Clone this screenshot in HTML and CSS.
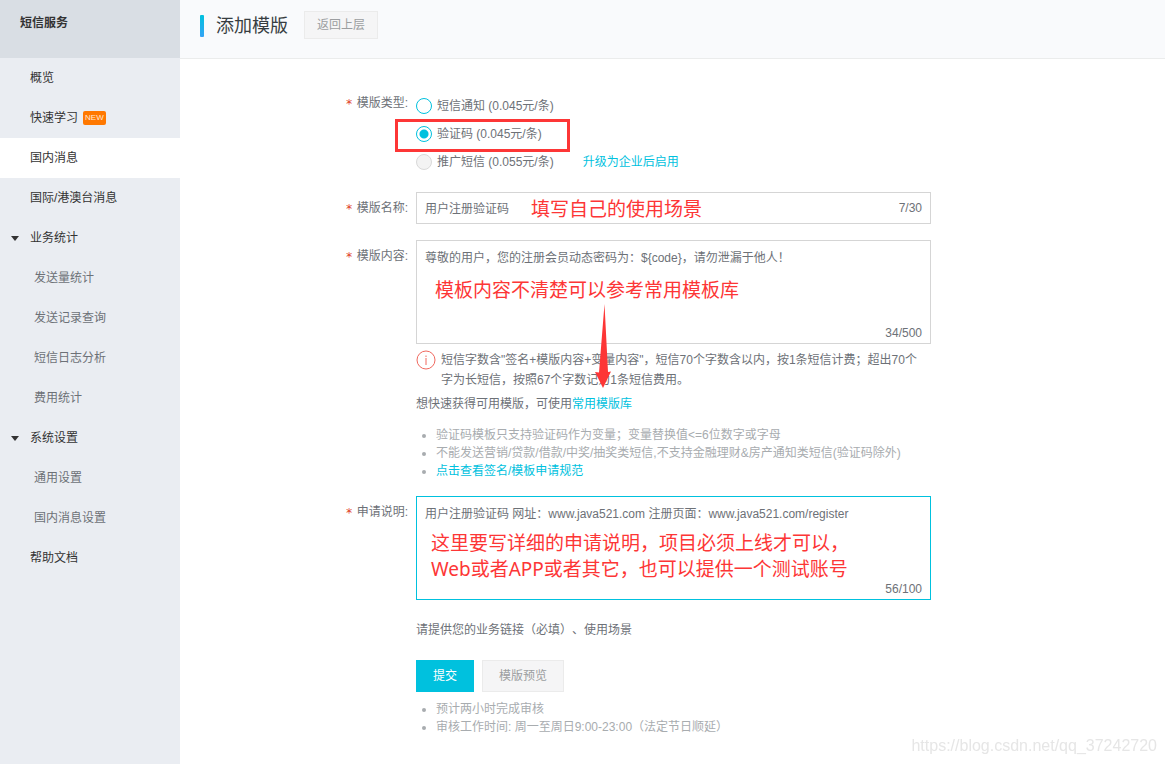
FILE: index.html
```html
<!DOCTYPE html>
<html lang="zh-CN">
<head>
<meta charset="utf-8">
<meta name="viewport" content="width=device-width, initial-scale=1">
<title>添加模版 - 短信服务</title>
<link rel="stylesheet" href="styles.css">
</head>
<body>
<div class="app">
  <aside class="sidebar">
    <div class="sidebar-title">短信服务</div>
    <nav>
      <ul class="menu">
        <li><a class="item" href="#">概览</a></li>
        <li><a class="item" href="#">快速学习<span class="badge">NEW</span></a></li>
        <li><a class="item active" href="#">国内消息</a></li>
        <li><a class="item" href="#">国际/港澳台消息</a></li>
        <li>
          <button class="item group" type="button" aria-expanded="true"><svg class="caret" viewBox="0 0 8 5" aria-hidden="true"><path d="M0 0H8L4 5Z"/></svg>业务统计</button>
          <ul class="menu">
            <li><a class="item sub" href="#">发送量统计</a></li>
            <li><a class="item sub" href="#">发送记录查询</a></li>
            <li><a class="item sub" href="#">短信日志分析</a></li>
            <li><a class="item sub" href="#">费用统计</a></li>
          </ul>
        </li>
        <li>
          <button class="item group" type="button" aria-expanded="true"><svg class="caret" viewBox="0 0 8 5" aria-hidden="true"><path d="M0 0H8L4 5Z"/></svg>系统设置</button>
          <ul class="menu">
            <li><a class="item sub" href="#">通用设置</a></li>
            <li><a class="item sub" href="#">国内消息设置</a></li>
          </ul>
        </li>
        <li><a class="item" href="#">帮助文档</a></li>
      </ul>
    </nav>
  </aside>

  <main class="main">
    <header class="page-head">
      <h1 class="page-title">添加模版</h1>
      <button class="btn btn-back" type="button">返回上层</button>
    </header>

    <form class="form">
      <div class="row" role="radiogroup" aria-labelledby="type-label">
        <div class="label" id="type-label"><span class="star">*</span>模版类型:</div>
        <div class="control">
          <div class="option"><input class="radio" type="radio" name="type" id="t1"><label for="t1">短信通知 (0.045元/条)</label></div>
          <div class="option"><input class="radio" type="radio" name="type" id="t2" checked><label for="t2">验证码 (0.045元/条)</label><span class="mark-box"></span></div>
          <div class="option"><input class="radio" type="radio" name="type" id="t3" disabled><label for="t3">推广短信 (0.055元/条)</label><a class="link upgrade" href="#">升级为企业后启用</a></div>
        </div>
      </div>

      <div class="row">
        <label class="label" for="name"><span class="star">*</span>模版名称:</label>
        <div class="control">
          <div class="field">
            <input class="box line" type="text" id="name" value="用户注册验证码">
            <span class="count count-line">7/30</span>
            <span class="note note-name">填写自己的使用场景</span>
          </div>
        </div>
      </div>

      <div class="row">
        <label class="label" for="content"><span class="star">*</span>模版内容:</label>
        <div class="control">
          <div class="field">
            <textarea class="box area" id="content">尊敬的用户，您的注册会员动态密码为：${code}，请勿泄漏于他人！</textarea>
            <span class="count">34/500</span>
            <span class="note note-content">模板内容不清楚可以参考常用模板库</span>
            <svg class="arrow" viewBox="0 0 16 84" aria-hidden="true"><path d="M9.500 0L13 68L16 67.500L8 84L0 68L4 68.500Z"/></svg>
          </div>
          <div class="tip">
            <svg class="tip-icon" viewBox="0 0 20 20" aria-hidden="true"><circle cx="10" cy="10" r="9"/><path d="M10 8V15M10 5.500V7"/></svg>
            <p class="tip-text">短信字数含"签名+模版内容+变量内容"，短信70个字数含以内，按1条短信计费；超出70个字为长短信，按照67个字数记为1条短信费用。</p>
          </div>
          <p class="help">想快速获得可用模版，可使用<a class="link" href="#">常用模版库</a></p>
          <ul class="bullets">
            <li>验证码模板只支持验证码作为变量；变量替换值&lt;=6位数字或字母</li>
            <li>不能发送营销/贷款/借款/中奖/抽奖类短信,不支持金融理财&amp;房产通知类短信(验证码除外)</li>
            <li><a class="link" href="#">点击查看签名/模板申请规范</a></li>
          </ul>
        </div>
      </div>

      <div class="row">
        <label class="label" for="reason"><span class="star">*</span>申请说明:</label>
        <div class="control">
          <div class="field">
            <textarea class="box area focused" id="reason">用户注册验证码 网址：www.java521.com 注册页面：www.java521.com/register</textarea>
            <span class="count">56/100</span>
            <span class="note note-reason">这里要写详细的申请说明，项目必须上线才可以，<br>Web或者APP或者其它，也可以提供一个测试账号</span>
          </div>
          <p class="help help-reason">请提供您的业务链接（必填）、使用场景</p>
          <div class="actions">
            <button class="btn btn-primary" type="submit">提交</button>
            <button class="btn btn-preview" type="button">模版预览</button>
          </div>
          <ul class="bullets bullets-end">
            <li>预计两小时完成审核</li>
            <li>审核工作时间: 周一至周日9:00-23:00（法定节日顺延）</li>
          </ul>
        </div>
      </div>
    </form>
  </main>
</div>
<div class="watermark">https://blog.csdn.net/qq_37242720</div>
</body>
</html>
```
FILE: styles.css
```css
* {
  box-sizing: border-box;
}

body {
  margin: 0;
  background: #fff;
  color: #6d7177;
  font: 12px/18px "Liberation Sans", "Noto Sans CJK SC", sans-serif;
  text-spacing-trim: space-all;
}

h1, p, ul {
  margin: 0;
  padding: 0;
}

button, input, textarea {
  margin: 0;
  font: inherit;
  color: inherit;
}

a {
  color: inherit;
  text-decoration: none;
}

.app {
  display: flex;
  min-height: 100vh;
}

/* Sidebar */
.sidebar {
  flex: 0 0 180px;
  background: #eaedf2;
  color: #333;
}

.sidebar-title {
  height: 58px;
  padding: 14px 20px;
  background: #d9dee4;
  font-weight: bold;
}

.menu {
  list-style: none;
}

.item {
  display: flex;
  align-items: center;
  width: 100%;
  height: 40px;
  padding: 0 0 0 30px;
  border: 0;
  background: none;
  text-align: left;
}

.item.active {
  background: #fff;
}

.item.group {
  padding-left: 11px;
}

.item.sub {
  padding-left: 34px;
  color: #6d7177;
}

.caret {
  width: 8px;
  height: 5px;
  margin-right: 11px;
  fill: #333;
}

.badge {
  margin-left: 5px;
  padding: 0 2px;
  border-radius: 2px;
  background: #ff7800;
  color: #ffe9d6;
  font-size: 8px;
  line-height: 14px;
}

/* Page header */
.main {
  flex: 1;
  min-width: 0;
}

.page-head {
  display: flex;
  align-items: flex-start;
  gap: 16px;
  height: 59px;
  padding: 11px 20px;
  border-bottom: 1px solid #ebecec;
  background: #f9fafc;
}

.page-title {
  display: flex;
  align-items: center;
  gap: 12px;
  color: #373d41;
  font-size: 18px;
  font-weight: normal;
  line-height: 30px;
}

.page-title::before {
  content: "";
  width: 4px;
  height: 22px;
  border-radius: 1px;
  background: linear-gradient(#00c1de, #35a3f5);
}

.btn {
  height: 32px;
  padding: 0 16px;
  border: 1px solid #ebebeb;
  background: #f5f5f6;
  color: #9b9ea0;
}

.btn-back {
  height: 28px;
  padding: 0 12px;
}

.btn-primary {
  border-color: #00c1de;
  background: #00c1de;
  color: #fff;
}

/* Form */
.form {
  display: grid;
  gap: 16px;
  padding: 33px 20px 20px 0;
}

.row {
  display: grid;
  grid-template-columns: 228px minmax(0, 515px);
  gap: 8px;
}

.label {
  display: flex;
  justify-content: flex-end;
  align-self: start;
  gap: 4px;
  padding-top: 7px;
}

.row:first-child .label {
  padding-top: 2px;
}

.star {
  color: #e0401f;
  font-family: "DejaVu Sans Mono", monospace;
  line-height: 20px;
}

.option {
  position: relative;
  display: flex;
  align-items: center;
  gap: 5px;
  height: 28px;
}

.radio {
  width: 16px;
  height: 16px;
  border: 1px solid #00c1de;
  border-radius: 50%;
  background: #fff;
  appearance: none;
}

.radio:checked {
  background: radial-gradient(circle, #00c1de 4px, #fff 5px);
}

.radio:disabled {
  border-color: #d9d9d9;
  background: #f3f3f3;
}

.upgrade {
  margin-left: 24px;
}

.mark-box {
  position: absolute;
  top: -1px;
  left: -21px;
  width: 175px;
  height: 33px;
  border: 3px solid #fd3636;
  pointer-events: none;
}

.link {
  color: #00c1de;
}

.field {
  position: relative;
}

.box {
  display: block;
  width: 100%;
  padding: 8px;
  border: 1px solid #d5d5d5;
  border-radius: 0;
  background: #fff;
  outline: 0;
}

.line {
  height: 32px;
  padding: 0 8px 2px;
}

.area {
  height: 104px;
  overflow: hidden;
  resize: none;
}

.focused {
  border-color: #00c1de;
}

.count {
  position: absolute;
  right: 9px;
  bottom: 2px;
}

.count-line {
  bottom: 7px;
}

/* Red annotations laid over the fields */
.note {
  position: absolute;
  color: #fd3636;
  font: 19px/26px "Noto Sans", "Noto Sans CJK SC", sans-serif;
  white-space: nowrap;
  pointer-events: none;
}

.note-name {
  top: 4px;
  left: 115px;
}

.note-content {
  top: 37px;
  left: 19px;
}

.note-reason {
  top: 34px;
  left: 15px;
}

.arrow {
  position: absolute;
  top: 64px;
  left: 179px;
  width: 16px;
  height: 84px;
  fill: #fd3636;
  pointer-events: none;
}

.tip {
  display: flex;
  gap: 5px;
  padding: 6px 8px 0 0;
}

.tip-icon {
  flex: none;
  width: 20px;
  height: 20px;
  fill: none;
  stroke: #f0695f;
}

.tip-text {
  line-height: 20px;
}

.help {
  margin-top: 5px;
}

.help-reason {
  margin-top: 21px;
}

.bullets {
  margin-top: 13px;
  padding-left: 20px;
  color: #a8acaf;
}

.bullets-end {
  margin-top: 8px;
}

.actions {
  display: flex;
  gap: 8px;
  margin-top: 21px;
}

.watermark {
  position: fixed;
  right: 8px;
  bottom: 8px;
  color: #e6e6e6;
  font-size: 16px;
  line-height: 20px;
  pointer-events: none;
}
```
